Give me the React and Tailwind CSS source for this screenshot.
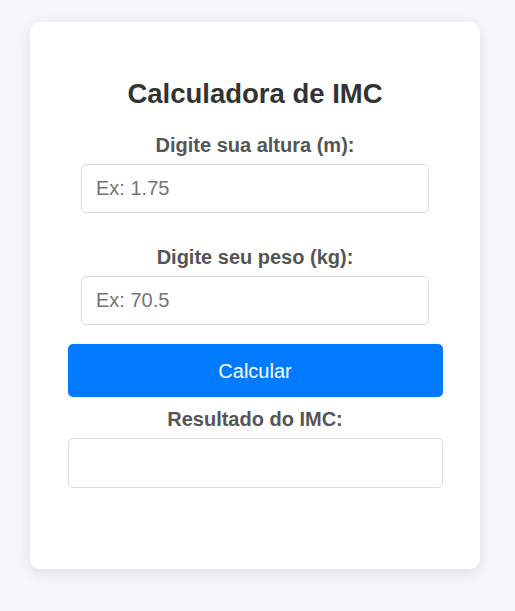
export default function App() {
  return (
    <div className="min-h-[611px] bg-[#f6f7fc] pl-[30px] pt-[22px] pb-[40px] font-['Liberation_Sans',Arial,sans-serif]">
      <div className="w-[450px] rounded-[10px] bg-white pt-[56px] pb-[81px] px-[37px] shadow-[0_4px_16px_rgba(0,0,0,0.1)] flex flex-col items-center">
        <h1 className="text-[27.5px] leading-[31px] font-bold text-[#333] text-center">Calculadora de IMC</h1>

        <label className="mt-[25px] text-[20px] leading-[23px] font-bold text-[#555]">Digite sua altura (m):</label>
        <input
          type="text"
          placeholder="Ex: 1.75"
          className="mt-[7px] w-[348px] h-[49px] px-[14px] text-[20px] border border-[#ddd] rounded-[5px] placeholder:text-[#757575] outline-none"
        />

        <label className="mt-[33px] text-[20px] leading-[23px] font-bold text-[#555]">Digite seu peso (kg):</label>
        <input
          type="text"
          placeholder="Ex: 70.5"
          className="mt-[7px] w-[348px] h-[49px] px-[14px] text-[20px] border border-[#ddd] rounded-[5px] placeholder:text-[#757575] outline-none"
        />

        <button className="mt-[19px] w-[375px] h-[53px] bg-[#007bff] text-white text-[20px] rounded-[5px]">
          Calcular
        </button>

        <label className="mt-[11px] text-[20px] leading-[23px] font-bold text-[#555]">Resultado do IMC:</label>
        <div className="mt-[7px] w-[375px] h-[50px] border border-[#ddd] rounded-[5px]"></div>
      </div>
    </div>
  );
}
